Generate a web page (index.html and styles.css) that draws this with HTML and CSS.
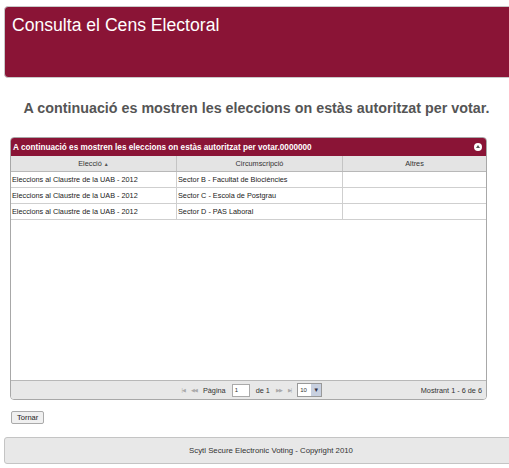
FILE: index.html
```html
<!DOCTYPE html>
<html lang="ca">
<head>
    <meta charset="UTF-8">
    <title>Consulta el Cens Electoral</title>
    <link rel="stylesheet" href="styles.css">
</head>
<body>

<div class="header">
    <h1>Consulta el Cens Electoral</h1>
</div>

<h2 class="intro">A continuació es mostren les eleccions on estàs autoritzat per votar.</h2>

<div class="grid">
    <div class="grid-title">
        <span>A continuació es mostren les eleccions on estàs autoritzat per votar.0000000</span>
        <span class="collapse"></span>
    </div>
    <table class="grid-table">
        <thead>
            <tr>
                <th class="col-eleccio">Elecció <span class="sort">&#9650;</span></th>
                <th class="col-circ">Circumscripció</th>
                <th>Altres</th>
            </tr>
        </thead>
        <tbody>
            <tr><td>Eleccions al Claustre de la UAB - 2012</td><td>Sector B - Facultat de Biociències</td><td></td></tr>
            <tr><td>Eleccions al Claustre de la UAB - 2012</td><td>Sector C - Escola de Postgrau</td><td></td></tr>
            <tr><td>Eleccions al Claustre de la UAB - 2012</td><td>Sector D - PAS Laboral</td><td></td></tr>
        </tbody>
    </table>
    <div class="grid-body"></div>
    <div class="pager">
        <div class="pager-center">
            <span class="nav">|&#9664;</span>
            <span class="nav">&#9664;&#9664;</span>
            <span>Pàgina</span>
            <span class="page-input">1</span>
            <span>de 1</span>
            <span class="nav">&#9654;&#9654;</span>
            <span class="nav">&#9654;|</span>
            <span class="rows-select"><span class="rows-value">10</span><span class="rows-btn">&#9660;</span></span>
        </div>
        <div class="pager-info">Mostrant 1 - 6 de 6</div>
    </div>
</div>

<button class="back-button">Tornar</button>

<div class="footer">Scytl Secure Electronic Voting - Copyright 2010</div>

</body>
</html>
```

FILE: styles.css
```css
html, body {
    margin: 0;
    padding: 0;
    background: #fff;
    overflow: hidden;
}
body {
    padding: 6px 0 0 4px;
    font-family: 'Liberation Sans', Arial, sans-serif;
    color: #222;
}
.header {
    height: 70px;
    margin-right: -10px;
    background: #8a1436;
    border: 1px solid #c9c9c9;
    border-radius: 4px;
}
.header h1 {
    margin: 0;
    padding: 8px 0 0 7px;
    font-size: 17.6px;
    font-weight: normal;
    color: #fff;
}
.intro {
    margin: 22px 0 0 0;
    text-align: center;
    font-size: 14.3px;
    font-weight: bold;
    color: #555;
}
.grid {
    width: 475px;
    margin: 21px 0 0 6px;
    border: 1px solid #a8a8a8;
    border-radius: 4px;
    font-size: 7.3px;
    display: flex;
    flex-direction: column;
    height: 261px;
}
.grid-title {
    height: 18px;
    background: #8a1436;
    color: #fff;
    font-weight: bold;
    font-size: 8.2px;
    display: flex;
    align-items: center;
    justify-content: space-between;
    padding: 0 4px 0 2px;
    border-radius: 3px 3px 0 0;
}
.collapse {
    width: 8px;
    height: 8px;
    border-radius: 50%;
    background: #fff;
    position: relative;
}
.collapse::after {
    content: "";
    position: absolute;
    left: 2px;
    top: 2px;
    border-left: 2px solid transparent;
    border-right: 2px solid transparent;
    border-bottom: 3px solid #555;
}
.grid-table {
    width: 100%;
    border-collapse: collapse;
    table-layout: fixed;
}
.grid-table th {
    height: 15px;
    padding: 0;
    background: #e4e4e4;
    font-weight: normal;
    color: #333;
    border-right: 1px solid #c4c4c4;
    border-bottom: 1px solid #b8b8b8;
    text-align: center;
}
.grid-table th:last-child {
    border-right: none;
}
.col-eleccio, .col-circ {
    width: 165px;
}
.sort {
    font-size: 5px;
    color: #555;
}
.grid-table td {
    height: 15px;
    padding: 0 1px;
    border-right: 1px solid #cfcfcf;
    border-bottom: 1px solid #cfcfcf;
    color: #222;
    white-space: nowrap;
    overflow: hidden;
}
.grid-table td:last-child {
    border-right: none;
}
.grid-body {
    flex: 1;
    background: #fff;
}
.pager {
    height: 18px;
    background: #e8e8e8;
    border-top: 1px solid #b8b8b8;
    border-radius: 0 0 3px 3px;
    display: flex;
    align-items: center;
    color: #333;
}
.pager-center {
    flex: 1;
    display: flex;
    align-items: center;
    justify-content: center;
    gap: 6px;
    padding-left: 72px;
}
.nav {
    font-size: 5px;
    color: #aaa;
    letter-spacing: -1px;
}
.page-input {
    width: 14px;
    height: 11px;
    background: #fff;
    border: 1px solid #aaa;
    padding-left: 2px;
    line-height: 11px;
    font-size: 6px;
}
.rows-select {
    display: flex;
    height: 12px;
    border: 1px solid #999;
    background: #fff;
    font-size: 6px;
}
.rows-value {
    width: 11px;
    padding-left: 2px;
    line-height: 12px;
}
.rows-btn {
    width: 10px;
    background: #c8d0e0;
    color: #334;
    font-size: 6px;
    text-align: center;
    line-height: 12px;
}
.pager-info {
    padding-right: 4px;
}
.back-button {
    display: block;
    margin: 11px 0 0 7px;
    padding: 0 5px;
    height: 13px;
    font-family: 'Liberation Sans', Arial, sans-serif;
    font-size: 7.5px;
    background: #f0f0f0;
    border: 1px solid #aaa;
    border-radius: 2px;
    color: #222;
}
.footer {
    margin: 13px -10px 0 0;
    height: 25px;
    line-height: 25px;
    background: #e8e8e8;
    border: 1px solid #c4c4c4;
    border-radius: 3px;
    text-align: center;
    font-size: 7.8px;
    color: #333;
    padding-left: 19px;
}
```
